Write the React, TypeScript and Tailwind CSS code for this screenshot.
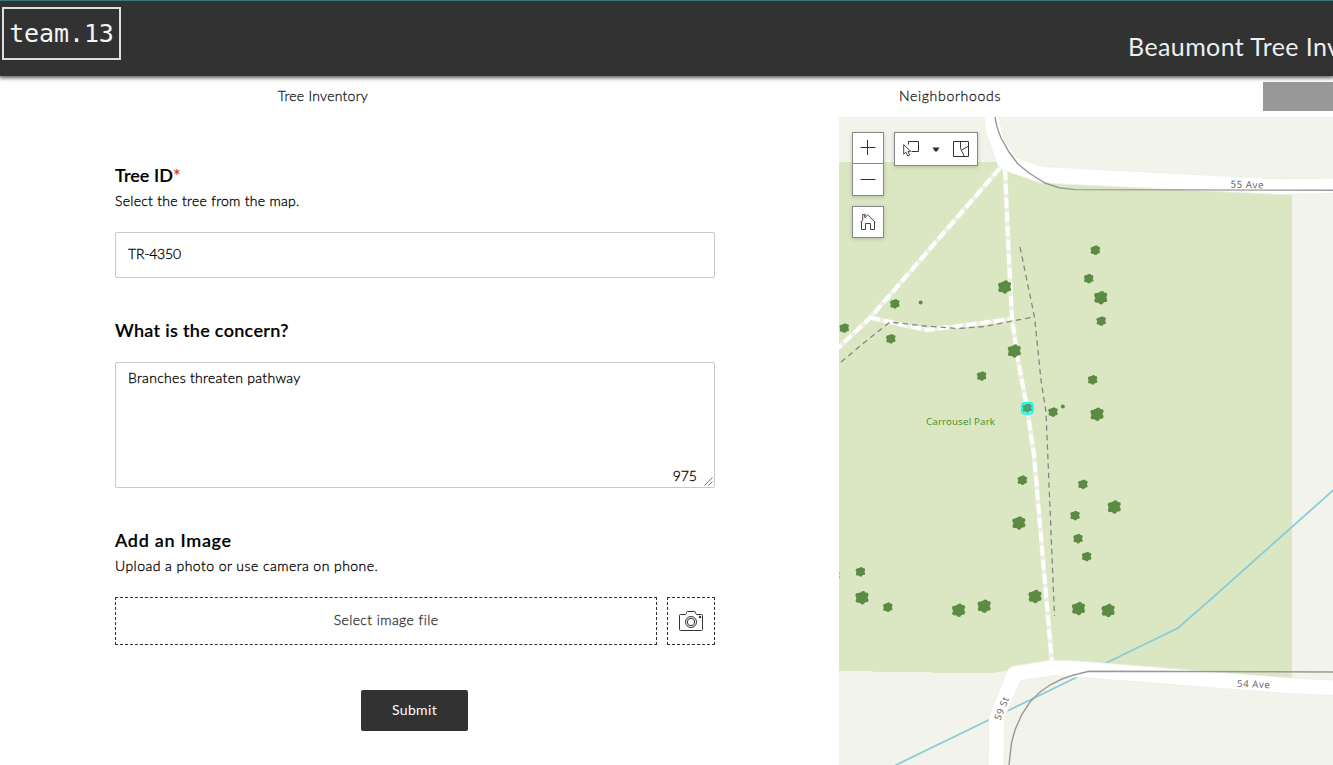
import React from "react";

type Tree = [x: number, y: number, radius: number];

const trees: Tree[] = [
  [1095.3, 250.2, 4.6], [1088.7, 278.6, 4.6], [1100.7, 297.6, 6.4], [1101.2, 321, 4.6],
  [1004.6, 287, 6.4], [894.8, 303.8, 4.6], [920.6, 302.5, 2], [844.2, 328, 4.6],
  [890.8, 338.8, 4.6], [1014.3, 351, 6.4], [981.6, 376, 4.6], [1092.6, 379.8, 4.6],
  [1027.2, 408, 4.6], [1053, 412, 4.6], [1062.8, 406.5, 2], [1097, 414.2, 6.4],
  [1022.3, 480.2, 4.6], [1082.9, 484.3, 4.6], [1114.2, 507, 6.4], [1075, 515.5, 4.6],
  [1018.8, 523, 6.4], [1078, 538.6, 4.6], [1086.6, 556.5, 4.6], [860.4, 571.8, 4.6],
  [862, 597.6, 6.4], [887.8, 607.2, 4.6], [958.6, 610.2, 6.4], [984.1, 606.1, 6.4],
  [1035, 596.5, 6.4], [1078.5, 608.5, 6.4], [1108.1, 610.5, 6.4], [834.8, 575.5, 4.6],
];

const lobes: [number, number][] = [
  [0.2, -0.7], [0.68, -0.45], [0.68, 0.36], [0.05, 0.72], [-0.64, 0.46], [-0.68, -0.36],
];

function TreeSymbol({ tree: [x, y, r] }: { tree: Tree }) {
  if (r < 3) return <circle cx={x} cy={y} r={r} />;
  return (
    <g transform={`translate(${x} ${y}) scale(${r})`}>
      <circle r="0.89" />
      {lobes.map(([cx, cy]) => (
        <circle key={`${cx}${cy}`} cx={cx} cy={cy} r="0.35" />
      ))}
    </g>
  );
}

const walkways = [
  "M1000 168L870 318L838 348",
  "M870 317.5L890 322L927 330L1012 319",
  "M1005 170L1008.5 250L1012 319L1018 360L1027 408L1034 455L1043 560L1052 664",
];

const topRoad =
  "M984 116L985.5 132L998 166L1003 170L1040 183L1280 194.5L1334 193.5V178L1280 179L1043 166.5L1017 158L1004 140L999 116Z";
const bottomRoad =
  "M988 766L989 716L1007 671Q1009 667 1014 666L1051 660L1078 661L1291 678L1334 680V695.5L1285 693.5L1055 675.5L1021 680.5L1004.5 717L1004 766Z";

function ParkMap() {
  return (
    <svg viewBox="839 117 494 648" className="block h-[648px] w-[494px]">
      <rect x="839" y="117" width="494" height="648" fill="#f2f3eb" />
      <path d="M839 162H998L1040 178L1292 190V678L1051 664L989 673.5V673H932V672H873V671H839Z" fill="#dbe7c3" />
      <path d="M895 765.5L1178 628L1210 600L1334 489.5" fill="none" stroke="#89cdd8" strokeWidth="1.8" />
      {walkways.map((d) => (
        <g key={d} fill="none">
          <path d={d} stroke="#eeeee2" strokeWidth="4.6" />
          <path d={d} stroke="#fff" strokeWidth="4" strokeDasharray="10 4" />
        </g>
      ))}
      <path d={topRoad} fill="#fff" stroke="#ecede1" strokeWidth="0.8" />
      <path d={bottomRoad} fill="#fff" stroke="#ecede1" strokeWidth="0.8" />
      <g fill="none" stroke="#999" strokeWidth="1.4">
        <path d="M995 117L997 127L1001 138L1009 152L1018 164L1029 173L1045 183L1059 187.7L1075 189.6L1333 190.3" />
        <path d="M1009 765L1011.5 743L1015 730L1021.5 715L1030 702L1040 692L1050 685L1062 679L1073 675.2L1089 671.3L1333 672" />
      </g>
      <g fill="none" stroke="#858585" strokeWidth="1.3" strokeDasharray="5.5 4">
        <path d="M1020 247L1034.5 317L1041 380L1046 412L1048 460L1054.5 616" />
        <path d="M841 362L865 342L890 322L925 326L958 328.5L985 326.5L1012 321L1034 317" />
      </g>
      <g fill="#5c8b43">
        {trees.map((t) => (
          <TreeSymbol key={`${t[0]}-${t[1]}`} tree={t} />
        ))}
      </g>
      <rect x="1021.8" y="402.8" width="11" height="11" rx="3" fill="#00ffff" fillOpacity="0.25" stroke="#00ffff" strokeWidth="1.7" />
      <g fontFamily="'Noto Sans', sans-serif" fontSize="9.7" textAnchor="middle">
        <text x="960.5" y="425" fill="#4f9130" textLength="69">
          Carrousel Park
        </text>
        <g fill="#6b6b6b">
          <text x="1247" y="188" textLength="33" transform="rotate(1.5 1247 185)">55 Ave</text>
          <text x="1253.5" y="687.5" textLength="33" transform="rotate(3 1253.5 684)">54 Ave</text>
          <text x="1001.5" y="712" textLength="24" transform="rotate(-68 1001.5 708.5)">59 St</text>
        </g>
      </g>
    </svg>
  );
}

function MapControls() {
  return (
    <div className="absolute left-[13px] top-[15px] flex items-start gap-[10px] text-[#323232]">
      <div className="flex flex-col gap-[10px]">
        <div className="w-8 border border-[#8a8a8a] bg-white shadow-[0_1px_4px_rgba(0,0,0,0.2)]">
          <button aria-label="Zoom in" className="flex h-[31px] w-full items-center justify-center border-b border-[#8a8a8a]">
            <svg width="16" height="16" viewBox="0 0 16 16" stroke="currentColor" fill="none">
              <path d="M0.5 7.5H15.5M7.5 0V15" />
            </svg>
          </button>
          <button aria-label="Zoom out" className="flex h-[31px] w-full items-center justify-center">
            <svg width="16" height="16" viewBox="0 0 16 16" stroke="currentColor" fill="none">
              <path d="M0.5 7.5H15.5" />
            </svg>
          </button>
        </div>
        <button aria-label="Default view" className="flex size-8 items-center justify-center border border-[#8a8a8a] bg-white shadow-[0_1px_4px_rgba(0,0,0,0.2)]">
          <svg width="16" height="18" viewBox="0 0 16 18" stroke="currentColor" fill="none" strokeWidth="0.9">
            <path d="M0.5 9.3L2.7 7.1V1.6H4.8V4.7L7.7 1.9L15.3 9.3M4.8 1.6L6 2.6M1.5 8.6V16.5H5.5V10.5H10.5V16.5H14.5V8.6" />
          </svg>
        </button>
      </div>
      <div className="flex h-[34px] w-[84px] items-center border border-[#8a8a8a] bg-white pl-[7px] shadow-[0_1px_4px_rgba(0,0,0,0.2)]">
        <svg width="18" height="18" viewBox="0 0 18 18" stroke="currentColor" fill="none">
          <path d="M6.5 4.5V1.5H16.5V11.5H9.5" />
          <path d="M1.7 4.7V14.2L3.9 12.2L5.7 16L7.7 15.1L5.9 11.3H8.7Z" fill="#fff" strokeWidth="0.9" />
        </svg>
        <svg width="8" height="5" viewBox="0 0 8 5" className="ml-[12px]">
          <path d="M0.5 0.5H7.5L5 4.5H3Z" fill="currentColor" />
        </svg>
        <svg width="17" height="17" viewBox="0 0 17 17" stroke="currentColor" fill="none" className="mb-[2px] ml-3">
          <path d="M1.5 1.5H16.5V16.5H1.5Z" />
          <path d="M8.5 1.5V8.5L12.5 16.5M9.5 10L16.5 6.2" strokeWidth="0.95" />
        </svg>
      </div>
    </div>
  );
}

function SectionTitle({ children }: { children: React.ReactNode }) {
  return <h2 className="pb-[2px] text-[18px] font-semibold leading-[22px] [-webkit-text-stroke:0.15px]">{children}</h2>;
}

function InventoryForm() {
  return (
    <form
      className="ml-[115px] mt-[47px] w-[600px] font-light text-black [-webkit-text-stroke:0.3px]"
      onSubmit={(e) => e.preventDefault()}
    >
      <SectionTitle>
        <span className="tracking-[0.05px]">Tree ID</span>
        <span className="font-normal text-[#c5372b]">*</span>
      </SectionTitle>
      <p className="mt-[3px] text-[14px] leading-5 tracking-[0.28px]">Select the tree from the map.</p>
      <div className="mt-[21px] flex h-[46px] items-center rounded-[2px] border border-[#c9c9c9] pb-[3px] pl-[12px] text-[14px] tracking-[-0.2px]">
        TR-4350
      </div>

      <div className="mt-[41px] tracking-[0.3px]">
        <SectionTitle>What is the concern?</SectionTitle>
      </div>
      <div className="mt-[19px] flex h-[126px] flex-col justify-between rounded-[2px] border border-[#c9c9c9] pl-[12px] pt-[5px] text-[14px] leading-5">
        <span className="tracking-[0.3px]">Branches threaten pathway</span>
        <div className="flex items-end justify-end">
          <span className="mr-[7px] pb-[1px] tracking-[0px]">975</span>
          <svg width="9" height="9" viewBox="0 0 9 9" className="mb-[1px] mr-[1px]" stroke="#666" fill="none" strokeWidth="0.9">
            <path d="M0.5 8.5L8.5 0.5M4.5 8.5L8.5 4.5" />
          </svg>
        </div>
      </div>

      <div className="mt-[41px] tracking-[0.7px]">
        <SectionTitle>Add an Image</SectionTitle>
      </div>
      <p className="mt-[3px] text-[14px] leading-5 tracking-[0.45px]">Upload a photo or use camera on phone.</p>
      <div className="mt-[21px] flex gap-[10px]">
        <button className="h-12 w-[542px] border border-dashed border-[#323232] pb-[3px] text-[14px] tracking-[0.4px] text-[#323232]">
          Select image file
        </button>
        <button aria-label="Take photo" className="flex size-12 items-center justify-center border border-dashed border-[#323232] text-[#323232]">
          <svg width="24" height="22" viewBox="0 0 24 22" stroke="currentColor" fill="none">
            <path d="M1.5 4.5H6.5L7.5 3.2V2.5Q7.5 1.5 8.5 1.5H15.5Q16.5 1.5 16.5 2.5V3.2L17.5 4.5H22.5Q23.5 4.5 23.5 5.5V19.5Q23.5 20.5 22.5 20.5H1.5Q0.5 20.5 0.5 19.5V5.5Q0.5 4.5 1.5 4.5Z" />
            <circle cx="12" cy="12" r="5.5" />
            <circle cx="12" cy="12" r="3.7" />
            <rect x="20.4" y="6.4" width="1.2" height="1.2" />
          </svg>
        </button>
      </div>
      <button className="ml-[246px] mt-[45px] block h-[41px] w-[107px] rounded-[2px] bg-[#323232] pb-[2px] text-[14px] font-normal tracking-[0.35px] text-white [-webkit-text-stroke:0px]">
        Submit
      </button>
    </form>
  );
}

export default function App() {
  return (
    <div className="flex h-[765px] w-[1333px] flex-col overflow-hidden bg-white font-['Lato','Open_Sans',sans-serif]">
      <header className="z-10 flex h-[76px] shrink-0 justify-between border-t border-[#357a7b] bg-[#323232] shadow-[0_1px_4px_1px_rgba(0,0,0,0.65)]">
        <div className="ml-[2px] mt-[6px] flex h-[53px] w-[119px] items-center justify-center border-2 border-[#dedede] font-['DejaVu_Sans_Mono',monospace] text-[25px] tracking-[-0.1px] text-[#f4f4f4]">
          team.13
        </div>
        <h1 className="w-[205px] whitespace-nowrap pt-[29px] text-[25px] leading-8 tracking-[0.4px] text-[#eeeeee]">
          Beaumont Tree Inventory
        </h1>
      </header>
      <nav className="flex h-[41px] shrink-0 text-[14px] font-light leading-5 text-[#222] tracking-[0.25px] [-webkit-text-stroke:0.3px]">
        <a className="w-[646px] pt-[10px] text-center">Tree Inventory</a>
        <a className="w-[608px] pt-[10px] text-center tracking-[0.7px]">Neighborhoods</a>
        <div className="ml-[9px] mt-[6px] h-[29px] w-[70px] bg-[#989898]" />
      </nav>
      <main className="flex h-[648px]">
        <section className="w-[839px]">
          <InventoryForm />
        </section>
        <section className="relative w-[494px]">
          <ParkMap />
          <MapControls />
        </section>
      </main>
    </div>
  );
}
